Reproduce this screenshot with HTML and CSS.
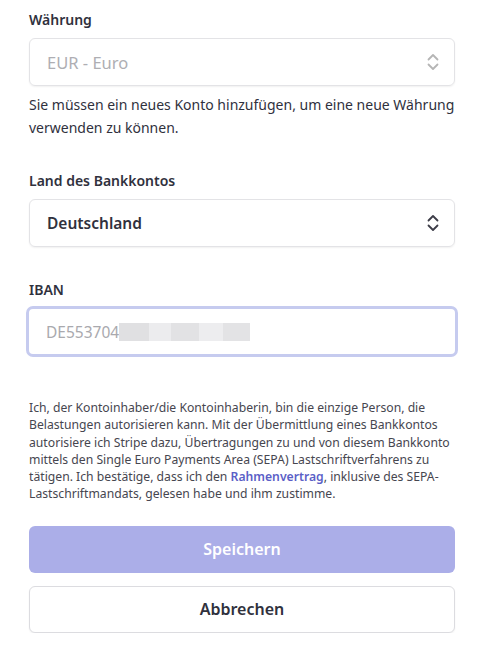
FILE: index.html
```html
<!DOCTYPE html>
<html lang="de">
<head>
<meta charset="utf-8">
<link rel="stylesheet" href="styles.css">
</head>
<body>
<form class="form">
  <div class="field">
    <label class="label">Währung</label>
    <div class="select select--disabled">
      <span class="select-value">EUR - Euro</span>
      <svg class="chev" width="14" height="20" viewBox="0 0 14 20"><path d="M2.5 7.5 L7 3 L11.5 7.5 M2.5 12.5 L7 17 L11.5 12.5" fill="none" stroke="#b5b5b5" stroke-width="1.8" stroke-linecap="round" stroke-linejoin="round"/></svg>
    </div>
    <p class="help">Sie müssen ein neues Konto hinzufügen, um eine neue Währung<br>verwenden zu können.</p>
  </div>

  <div class="field field--country">
    <label class="label">Land des Bankkontos</label>
    <div class="select">
      <span class="select-value select-value--strong">Deutschland</span>
      <svg class="chev" width="14" height="20" viewBox="0 0 14 20"><path d="M2.5 7.5 L7 3 L11.5 7.5 M2.5 12.5 L7 17 L11.5 12.5" fill="none" stroke="#3d3d48" stroke-width="1.8" stroke-linecap="round" stroke-linejoin="round"/></svg>
    </div>
  </div>

  <div class="field field--iban">
    <label class="label">IBAN</label>
    <div class="input input--focus">
      <span class="input-value">DE553704</span><span class="redact"><i class="r1"></i><i class="r2"></i><i class="r3"></i><i class="r4"></i><i class="r5"></i></span>
    </div>
  </div>

  <p class="legal">Ich, der Kontoinhaber/die Kontoinhaberin, bin die einzige Person, die<br>Belastungen autorisieren kann. Mit der Übermittlung eines Bankkontos<br>autorisiere ich Stripe dazu, Übertragungen zu und von diesem Bankkonto<br>mittels den Single Euro Payments Area (SEPA) Lastschriftverfahrens zu<br>tätigen. Ich bestätige, dass ich den <a class="link">Rahmenvertrag</a>, inklusive des SEPA-<br>Lastschriftmandats, gelesen habe und ihm zustimme.</p>

  <button type="button" class="btn btn--primary">Speichern</button>
  <button type="button" class="btn btn--secondary">Abbrechen</button>
</form>
</body>
</html>
```

FILE: styles.css
```css
* { box-sizing: border-box; }
html, body { margin: 0; padding: 0; background: #fff; }
body {
  font-family: "Noto Sans", "Open Sans", sans-serif;
  color: #30313d;
  width: 500px;
}
.form {
  display: flex;
  flex-direction: column;
  padding: 10px 45px 0 29px;
}
.field { display: flex; flex-direction: column; }
.label {
  font-size: 14px;
  line-height: 20px;
  font-weight: 600;
  color: #30313d;
  margin-bottom: 8px;
}
.select {
  height: 48px;
  border: 1px solid #e3e3e6;
  border-radius: 6px;
  box-shadow: 0 1px 2px rgba(0,0,0,0.06);
  display: flex;
  align-items: center;
  justify-content: space-between;
  padding: 0 14px 0 17px;
}
.select-value { font-size: 16.5px; color: #aeaeb3; }
.select-value--strong { font-size: 15.5px; font-weight: 600; color: #30313d; }
.chev { display: block; }
.help {
  margin: 7px -10px 0 0;
  font-size: 14px;
  line-height: 23px;
  color: #30313d;
  white-space: nowrap;
}
.field--country { margin-top: 32px; }
.field--iban { margin-top: 33px; }
.field--iban .label { margin-bottom: 6px; }
.input {
  height: 51px;
  margin: 0 -3px;
  border: 3px solid #c6cbef;
  border-radius: 7px;
  display: flex;
  align-items: center;
  padding: 0 16px 0 17px;
}
.input-value { font-size: 15.5px; color: #a9a9ae; }
.redact { display: flex; align-items: center; height: 20px; }
.redact i { display: block; height: 18px; background: #e6e6e8; }
.redact .r1 { width: 30px; background: #e0e0e2; }
.redact .r2 { width: 22px; background: #ececee; }
.redact .r3 { width: 28px; background: #e2e2e4; }
.redact .r4 { width: 24px; background: #ededef; }
.redact .r5 { width: 27px; background: #e3e3e5; }
.legal {
  margin: 42px -20px 0 0;
  font-size: 12.2px;
  line-height: 17.3px;
  color: #46464f;
  white-space: nowrap;
}
.link { color: #5b5fc7; font-weight: 600; text-decoration: none; }
.btn {
  height: 47px;
  border-radius: 6px;
  font-family: inherit;
  font-size: 16px;
  font-weight: 600;
  cursor: pointer;
}
.btn--primary {
  margin-top: 23px;
  background: #abaee8;
  color: #fff;
  border: none;
}
.btn--secondary {
  margin-top: 13px;
  background: #fff;
  color: #30313d;
  border: 1px solid #dcdce0;
  box-shadow: 0 1px 2px rgba(0,0,0,0.06);
}
```
